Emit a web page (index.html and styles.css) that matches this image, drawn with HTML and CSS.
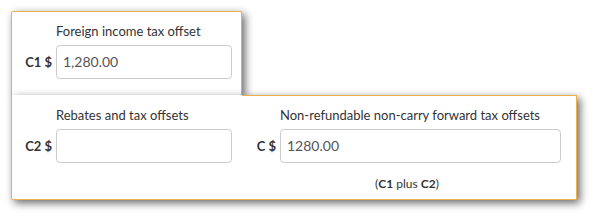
FILE: index.html
```html
<!DOCTYPE html>
<html>
<head>
<meta charset="utf-8">
<link rel="stylesheet" href="styles.css">
</head>
<body>
<div class="page">
  <div class="panel panel-top">
    <div class="field">
      <div class="caption">Foreign income tax offset</div>
      <div class="prefix">C1 $</div>
      <div class="input narrow">1,280.00</div>
    </div>
  </div>
  <div class="panel panel-bottom">
    <div class="field">
      <div class="caption">Rebates and tax offsets</div>
      <div class="prefix">C2 $</div>
      <div class="input narrow"></div>
    </div>
    <div class="field">
      <div class="caption">Non-refundable non-carry forward tax offsets</div>
      <div class="prefix">C $</div>
      <div class="input wide">1280.00</div>
      <div class="note">(<b>C1</b> plus <b>C2</b>)</div>
    </div>
  </div>
</div>
</body>
</html>
```

FILE: styles.css
```css
html, body {
  margin: 0;
  padding: 0;
  background: #fff;
}
body {
  font-family: Lato, "Open Sans", "Liberation Sans", sans-serif;
  color: #333;
}
.page {
  padding: 11px 0 20px 11px;
  display: flex;
  flex-direction: column;
  align-items: flex-start;
}
.panel {
  background: #fff;
  border: 1px solid #f0ad4e;
  border-radius: 2px;
  box-shadow: 3px 3px 8px rgba(0, 0, 0, 0.6);
}
.panel-top {
  width: 231px;
  height: 84px;
  border-bottom: none;
  border-radius: 2px 2px 0 0;
  padding-top: 10px;
  box-sizing: border-box;
  position: relative;
  z-index: 1;
}
.panel-bottom {
  position: relative;
  z-index: 2;
  width: 566px;
  height: 105px;
  box-sizing: border-box;
  border-top: none;
  border-radius: 0 0 2px 2px;
  display: flex;
  align-items: flex-start;
  gap: 4px;
  padding-top: 11px;
}
.panel-bottom::before {
  content: "";
  position: absolute;
  top: 0;
  left: 230px;
  right: -1px;
  height: 1px;
  background: #f0ad4e;
  border-top-right-radius: 2px;
}
.field {
  display: grid;
  grid-template-columns: 44px auto;
  align-items: center;
}
.caption {
  grid-column: 2;
  font-size: 13px;
  line-height: 18px;
  margin-bottom: 5px;
  white-space: nowrap;
}
.prefix {
  grid-column: 1;
  text-align: right;
  padding-right: 4px;
  font-weight: bold;
  font-size: 13px;
  color: #333;
  white-space: nowrap;
}
.input {
  grid-column: 2;
  box-sizing: border-box;
  height: 34px;
  border: 1px solid #ccc;
  border-radius: 4px;
  padding: 0 6px;
  font-size: 14px;
  line-height: 32px;
  color: #555;
}
.narrow { width: 176px; }
.wide { width: 281px; }
.note {
  grid-column: 2;
  font-size: 12px;
  line-height: 18px;
  margin-top: 12px;
  padding-left: 95px;
  color: #333;
}
.note b { font-weight: bold; }
```
